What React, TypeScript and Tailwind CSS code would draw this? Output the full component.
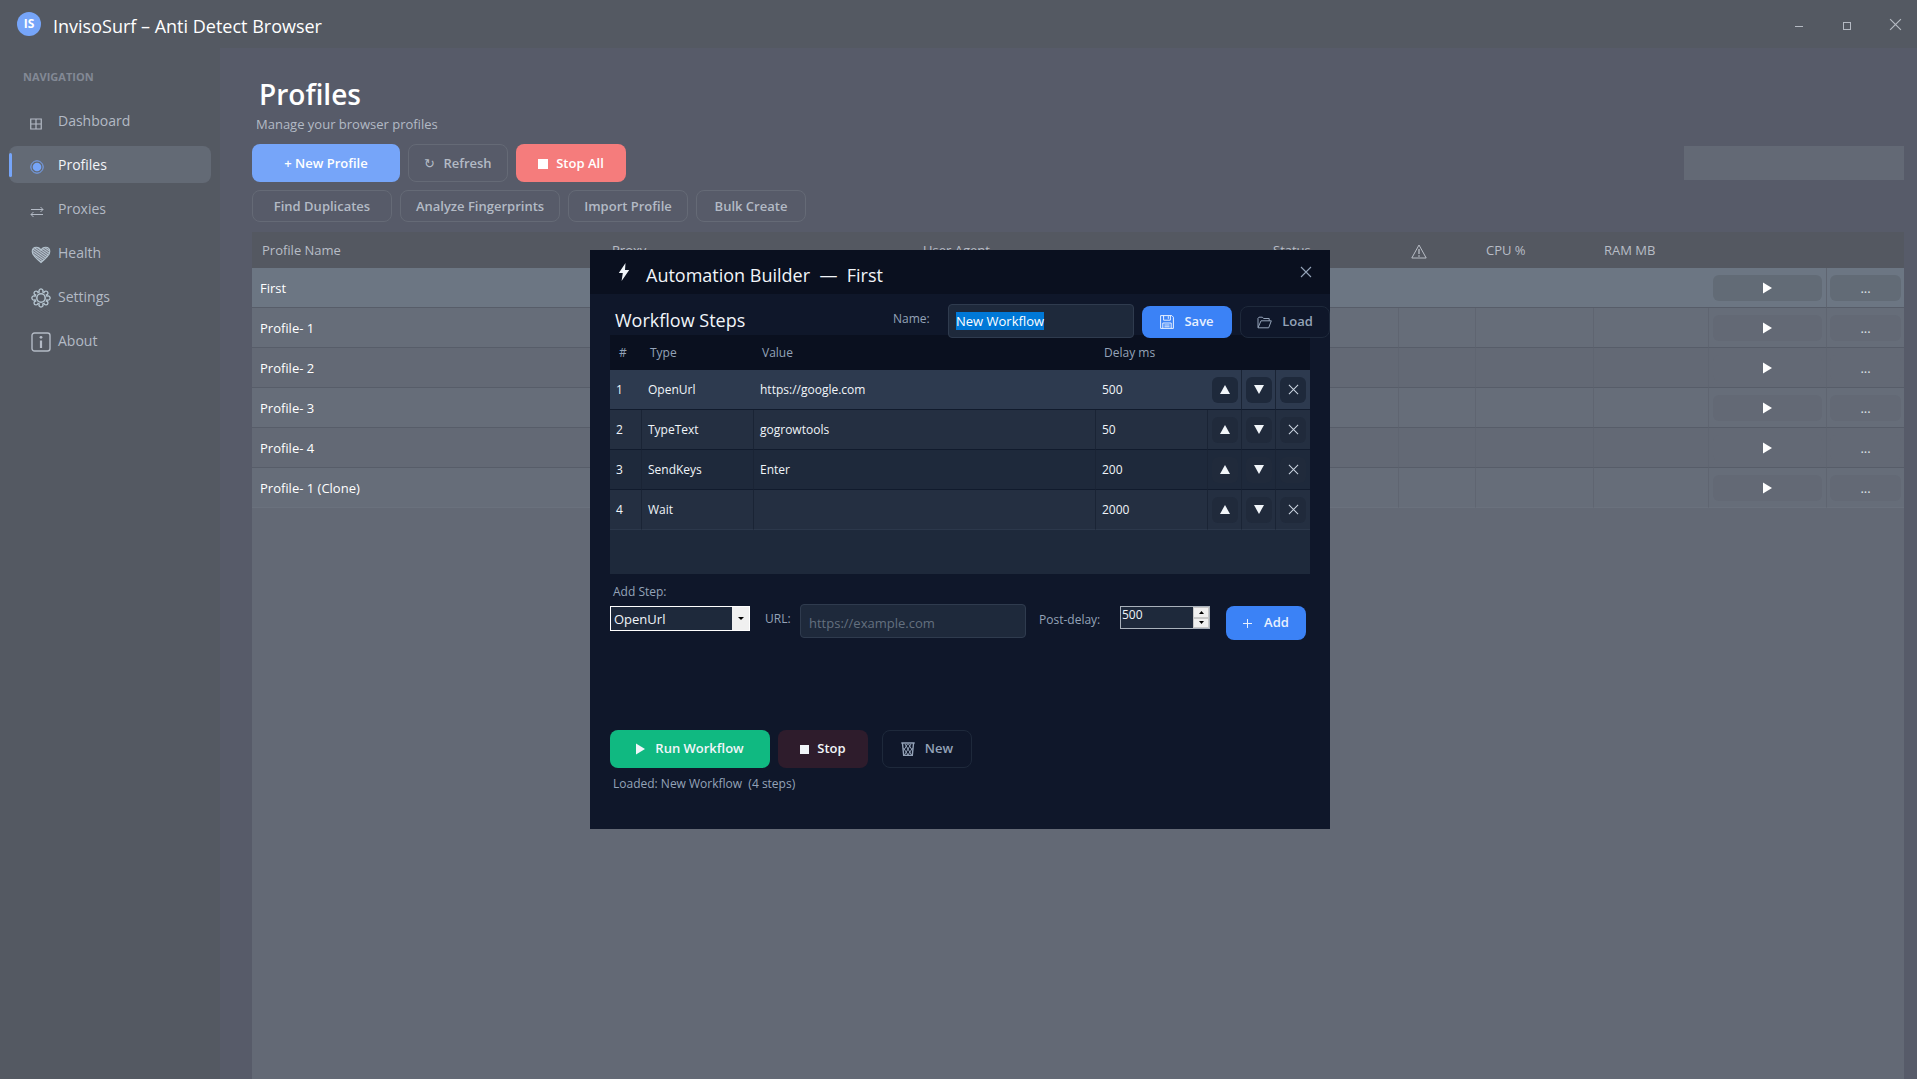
import { useEffect, useRef } from "react";
import { clsx } from "clsx";

const GridIcon = () => (
  <svg width="12" height="12" viewBox="0 0 12 12" fill="none" stroke="currentColor" className="mt-1.5">
    <path d="M.75 1h10.5v10H.75zM6 1v10M.75 6h10.5" strokeWidth="1.2" />
  </svg>
);

const TargetIcon = () => (
  <svg width="14" height="14" viewBox="0 0 14 14" fill="none" stroke="currentColor" className="mt-1">
    <circle cx="7" cy="7" r="6.2" strokeWidth="1" />
    <circle cx="7" cy="7" r="4.3" fill="currentColor" stroke="none" />
  </svg>
);

const SwapIcon = () => (
  <svg width="14" height="12" viewBox="0 0 14 12" fill="none" stroke="currentColor" className="mt-1.5">
    <path d="M1 3.5h12M10.5 1l2.5 2.5L10.5 6M13 8.5H1M3.5 6L1 8.5 3.5 11" strokeWidth="1" />
  </svg>
);

const HeartIcon = () => (
  <svg width="21" height="18" viewBox="-1 0 21 18" className="mt-1">
    <defs>
      <pattern id="hatch" width="2" height="2" patternUnits="userSpaceOnUse" patternTransform="rotate(-55)">
        <rect width="1.3" height="2" fill="#b9c5d2" />
      </pattern>
    </defs>
    <path
      d="M10 16.5C7 13.5 1.2 10 1.2 5.6 1.2 3 3 1.2 5.4 1.2c2 0 3.7 1.2 4.6 3 .9-1.8 2.6-3 4.6-3 2.4 0 4.2 1.8 4.2 4.4 0 4.4-5.8 7.9-8.8 10.9z"
      fill="url(#hatch)"
      stroke="#b4c3ce"
      strokeWidth="1.1"
    />
  </svg>
);

const GearIcon = () => (
  <svg width="21" height="20" viewBox="-1 0 21 20" fill="none" stroke="#b4c3ce" className="mt-0.5">
    <circle cx="10" cy="10" r="4.2" strokeWidth="1.5" />
    <path
      d="M8.3 4a2 2 0 1 1 3.4 0l1.3.6a2 2 0 1 1 2.4 2.4l.6 1.3a2 2 0 1 1 0 3.4l-.6 1.3a2 2 0 1 1-2.4 2.4l-1.3.6a2 2 0 1 1-3.4 0L7 15.4A2 2 0 1 1 4.6 13L4 11.7a2 2 0 1 1 0-3.4L4.6 7A2 2 0 1 1 7 4.6z"
      strokeWidth="1.3"
    />
  </svg>
);

const InfoIcon = () => (
  <svg width="21" height="20" viewBox="-1 0 21 20" fill="none" stroke="currentColor" className="mt-0.5">
    <rect x="1" y="1" width="18" height="18" rx="2.5" strokeWidth="1.4" />
    <path d="M10 8.5V16" strokeWidth="2.2" />
    <circle cx="10" cy="5.3" r="1.4" fill="currentColor" stroke="none" />
  </svg>
);

const WarnIcon = () => (
  <svg width="16" height="15" viewBox="0 0 16 15" fill="none" stroke="currentColor">
    <path d="M8 1L15.2 14H.8z" strokeWidth="1" />
    <path d="M8 5v5M8 11.3v1.4" strokeWidth="1.3" />
  </svg>
);

const BoltIcon = () => (
  <svg width="12" height="20" viewBox="0 0 12 20" fill="currentColor">
    <path d="M7.5 1L.8 11h4L3.6 19l7.6-11H7z" />
  </svg>
);

const SaveIcon = () => (
  <svg width="14" height="14" viewBox="0 0 14 14" fill="none" stroke="currentColor">
    <path d="M.6.6h11.2l1.6 1.6v11.2H.6zM3.6.6v4.6h6.8V.6M8.3 1.2v2.6M2.8 13.4V8h8.4v5.4M4.4 10h5.2M4.4 11.8h5.2" />
  </svg>
);

const FolderIcon = () => (
  <svg width="15" height="13" viewBox="0 0 15 13" fill="none" stroke="currentColor">
    <path d="M1 11.5V2.2L2 1.2h3.4l1.2 1.3h5.6v2.3M1 11.8l3-7h10.3l-2.6 7z" strokeLinejoin="round" />
  </svg>
);

const TrashIcon = () => (
  <svg width="14" height="14" viewBox="0 0 14 14" fill="none" stroke="currentColor">
    <path d="M.3 1h13.4M1.5 1.5l1.2 12h8.6l1.2-12" strokeWidth="1.4" />
    <path d="M4 2l6.5 11M7.5 2l3.5 6M10 2L3.5 13M6.5 2L3 8M2.5 6l4.5 7M11.5 6L7 13" strokeWidth="1" />
  </svg>
);

const XIcon = ({ size }: { size: number }) => (
  <svg width={size} height={size} viewBox="0 0 12 12" stroke="currentColor" fill="none">
    <path d="M1 1l10 10M11 1L1 11" strokeWidth="1.1" />
  </svg>
);

const PlayGlyph = () => (
  <svg width="9" height="12" viewBox="0 0 9 12" fill="currentColor">
    <path d="M0 0.5L9 6 0 11.5z" />
  </svg>
);

const UpGlyph = () => (
  <svg width="10" height="9" viewBox="0 0 10 9" fill="currentColor">
    <path d="M5 0l5 9H0z" />
  </svg>
);

const DownGlyph = () => (
  <svg width="10" height="9" viewBox="0 0 10 9" fill="currentColor">
    <path d="M0 0h10L5 9z" />
  </svg>
);

const navItems = [
  { label: "Dashboard", icon: <GridIcon /> },
  { label: "Profiles", icon: <TargetIcon />, active: true },
  { label: "Proxies", icon: <SwapIcon /> },
  { label: "Health", icon: <HeartIcon /> },
  { label: "Settings", icon: <GearIcon /> },
  { label: "About", icon: <InfoIcon /> },
];

const profiles = ["First", "Profile- 1", "Profile- 2", "Profile- 3", "Profile- 4", "Profile- 1 (Clone)"];

const steps = [
  { type: "OpenUrl", value: "https://google.com", delay: "500" },
  { type: "TypeText", value: "gogrowtools", delay: "50" },
  { type: "SendKeys", value: "Enter", delay: "200" },
  { type: "Wait", value: "", delay: "2000" },
];

const TitleBar = () => (
  <header className="-mr-0.5 flex h-12 shrink-0 items-center bg-[#545962] pl-[17px] text-[#b5bac3]">
    <div className="flex size-6 items-center justify-center rounded-full bg-[#76a5f9] text-xs font-bold text-white">
      IS
    </div>
    <h1 className="mt-1 ml-3 flex-1 text-lg leading-6 font-medium text-white">InvisoSurf – Anti Detect Browser</h1>
    <button aria-label="Minimize" className="flex h-12 w-12 items-center justify-center">
      <span className="mt-1 h-px w-2 bg-current" />
    </button>
    <button aria-label="Maximize" className="flex h-12 w-12 items-center justify-center">
      <span className="mt-1 size-2 border border-current" />
    </button>
    <button aria-label="Close" className="flex h-12 w-12 items-center justify-center">
      <XIcon size={13} />
    </button>
  </header>
);

const Sidebar = () => (
  <aside className="w-[220px] shrink-0 bg-[#545962] px-[9px] pt-5">
    <p className="pl-[14px] text-[11px] leading-[18px] font-bold text-[#838995]">NAVIGATION</p>
    <nav className="mt-4 flex flex-col gap-[7px]">
      {navItems.map((item) => (
        <a
          key={item.label}
          href="#"
          className={clsx(
            "relative flex h-[37px] items-center rounded-lg pl-[21px] text-sm",
            item.active ? "bg-[#636a75] text-[#f3f5f8]" : "text-[#b3bac5]"
          )}
        >
          {item.active && <span className="absolute left-0 h-6 w-[3px] rounded-sm bg-[#76a5f9]" />}
          <span className={clsx("w-7", item.active && "text-[#76a5f9]")}>{item.icon}</span>
          {item.label}
        </a>
      ))}
    </nav>
  </aside>
);

const OutlineButton = ({ children, className }: { children: React.ReactNode; className?: string }) => (
  <button
    className={clsx(
      "flex items-center justify-center rounded-lg border border-[#656a76] pt-0.5 text-[13px] font-semibold text-[#b3bac5]",
      className
    )}
  >
    {children}
  </button>
);

const ProfileTable = () => (
  <div className="mt-2.5 flex-1 bg-[#636975]">
    <table className="w-full table-fixed border-separate border-spacing-0 text-left text-[13px] text-white">
      <colgroup>
        <col />
        <col className="w-[311px]" />
        <col />
        <col className="w-[136px]" />
        <col className="w-[77px]" />
        <col className="w-[118px]" />
        <col className="w-[115px]" />
        <col className="w-[118px]" />
        <col className="w-[77px]" />
      </colgroup>
      <thead>
        <tr className="h-9 bg-[#545861] text-[#b8bdc6]">
          <th className="pt-0.5 pl-2.5 font-normal">Profile Name</th>
          <th className="pt-0.5 pl-2.5 font-normal">Proxy</th>
          <th className="pt-0.5 pl-2.5 font-normal">User Agent</th>
          <th className="pt-0.5 pl-2.5 font-normal">Status</th>
          <th className="pt-0.5 pl-3 font-normal" aria-label="Warnings">
            <WarnIcon />
          </th>
          <th className="pt-0.5 pl-2.5 font-normal">CPU %</th>
          <th className="pt-0.5 pl-2.5 font-normal">RAM MB</th>
          <th />
          <th />
        </tr>
      </thead>
      <tbody>
        {profiles.map((name, i) => (
          <tr
            key={name}
            className={clsx(
              "h-10 [&>td]:border-b [&>td]:border-[#575d69] last:[&>td]:border-b-[#6a717d]",
              i === 0 ? "bg-[#6c7683]" : i % 2 ? "bg-[#666d79]" : "bg-[#636975]"
            )}
          >
            <td className="pt-0.5 pl-2">{name}</td>
            {[0, 1, 2, 3, 4, 5].map((c) => (
              <td key={c} className={i ? "border-r border-r-[#5f6571]!" : undefined} />
            ))}
            <td className="border-r border-r-[#5f6571]! px-1">
              <button
                aria-label={`Run ${name}`}
                className={clsx("flex h-[26px] w-full items-center justify-center rounded-md", i ? "bg-[#636975]" : "bg-[#626b76]")}
              >
                <PlayGlyph />
              </button>
            </td>
            <td className="px-[3px]">
              <button
                aria-label={`More actions for ${name}`}
                className={clsx(
                  "block h-[26px] w-full rounded-md text-[13px] leading-5 text-[#dfe3e8]",
                  i ? "bg-[#636975]" : "bg-[#626b76]"
                )}
              >
                ...
              </button>
            </td>
          </tr>
        ))}
      </tbody>
    </table>
  </div>
);

const StepButton = ({
  label,
  lit,
  className,
  children,
}: {
  label: string;
  lit: boolean;
  className: string;
  children: React.ReactNode;
}) => (
  <button
    aria-label={label}
    className={clsx(
      "mx-auto flex size-[26px] items-center justify-center rounded-md",
      lit ? "bg-[#1e293b]" : "bg-[#202a3b]",
      className
    )}
  >
    {children}
  </button>
);

const StepTable = () => (
  <div className="h-[239px] bg-[#1e293b]">
    <table className="w-full table-fixed border-separate border-spacing-0 text-left text-xs text-[#f1f5f9]">
      <colgroup>
        <col className="w-8" />
        <col className="w-28" />
        <col />
        <col className="w-28" />
        <col className="w-[34px]" />
        <col className="w-[34px]" />
        <col className="w-[34px]" />
      </colgroup>
      <thead>
        <tr className="h-[35px] bg-[#0a101f] text-[#94a3b8]">
          <th className="pl-[9px] font-normal">#</th>
          <th className="pl-2 font-normal">Type</th>
          <th className="pl-2 font-normal">Value</th>
          <th className="pl-2 font-normal">Delay ms</th>
          <th />
          <th />
          <th />
        </tr>
      </thead>
      <tbody>
        {steps.map((step, i) => {
          const cell = clsx("pl-1.5", i > 0 && "border-r border-r-[#1a2435]!");
          return (
            <tr
              key={step.type}
              className={clsx(
                "h-10 [&>td]:border-b [&>td]:border-[#111b2d] last:[&>td]:border-b-[#2c384b]",
                i === 0 ? "bg-[#2d3a4f]" : i % 2 ? "bg-[#242f41]" : "bg-[#1e293b]"
              )}
            >
              <td className={cell}>{i + 1}</td>
              <td className={cell}>{step.type}</td>
              <td className={cell}>{step.value}</td>
              <td className={cell}>{step.delay}</td>
              <td className="border-r border-r-[#1a2435]!">
                <StepButton label={`Move step ${i + 1} up`} lit={i === 0} className="text-[#f1f5f9]">
                  <UpGlyph />
                </StepButton>
              </td>
              <td className="border-r border-r-[#1a2435]!">
                <StepButton label={`Move step ${i + 1} down`} lit={i === 0} className="text-[#f1f5f9]">
                  <DownGlyph />
                </StepButton>
              </td>
              <td>
                <StepButton label={`Delete step ${i + 1}`} lit={i === 0} className="text-[#cbd5e1]">
                  <XIcon size={11} />
                </StepButton>
              </td>
            </tr>
          );
        })}
      </tbody>
    </table>
  </div>
);

const AutomationBuilder = () => {
  const nameRef = useRef<HTMLInputElement>(null);

  useEffect(() => {
    nameRef.current?.focus();
    nameRef.current?.select();
  }, []);

  return (
    <section
      role="dialog"
      aria-label="Automation Builder"
      className="flex w-[740px] flex-col bg-[#0f172a] pb-[35px] text-xs text-[#94a3b8]"
    >
      <div className="flex h-11 shrink-0 items-center bg-[#0a101f] pr-[18px] pl-7 text-[#f1f5f9]">
        <BoltIcon />
        <h2 className="mt-1.5 ml-4 flex-1 text-lg leading-6 font-medium whitespace-pre">Automation Builder  —  First</h2>
        <button aria-label="Close dialog" className="text-[#94a3b8]">
          <XIcon size={12} />
        </button>
      </div>

      <div className="relative flex h-[41px] shrink-0 items-start pt-2.5 pl-[25px]">
        <h3 className="flex-1 pt-1 text-lg leading-6 font-medium text-[#f1f5f9]">Workflow Steps</h3>
        <label htmlFor="name" className="w-[55px] pt-[7px] leading-4">
          Name:
        </label>
        <input
          id="name"
          ref={nameRef}
          defaultValue="New Workflow"
          className="h-[34px] w-[186px] rounded-sm border border-[#2f3b4e] bg-[#1e293b] px-[7px] text-[13px] text-white outline-none selection:bg-[#0078d7] selection:text-white"
        />
        <button className="mt-0.5 ml-2 flex h-8 w-[90px] items-center justify-center gap-2.5 rounded-lg bg-[#3b82f6] text-[13px] font-semibold text-[#e8f0fe]">
          <SaveIcon />
          Save
        </button>
        <button className="mt-0.5 ml-2 flex h-8 w-[90px] items-center justify-center gap-2.5 rounded-lg border border-[#1e293b] bg-[#0f172a] text-[13px] font-semibold text-[#94a3b8]">
          <FolderIcon />
          Load
        </button>
      </div>

      <div className="px-5">
        <StepTable />

        <p className="mt-2 pl-[3px] leading-5">Add Step:</p>
        <div className="mt-0.5 flex items-start">
          <div className="relative mt-0.5 h-[25px] w-[140px] border border-white bg-[#1e293b]">
            <select
              aria-label="Add Step"
              className="h-full w-full appearance-none pl-[3px] text-[13px] leading-5 text-[#f1f5f9] outline-none"
            >
              <option>OpenUrl</option>
              <option>TypeText</option>
              <option>SendKeys</option>
              <option>Wait</option>
            </select>
            <span className="pointer-events-none absolute inset-y-0 right-0 flex w-[17px] items-center justify-center bg-[#f0f0f0] text-black">
              <svg width="6" height="3" viewBox="0 0 6 3" fill="currentColor">
                <path d="M0 0h6L3 3z" />
              </svg>
            </span>
          </div>
          <label htmlFor="url" className="ml-[15px] w-[35px] pt-[7px] leading-4">
            URL:
          </label>
          <input
            id="url"
            placeholder="https://example.com"
            className="h-[34px] w-[226px] rounded-sm border border-[#2f3b4e] bg-[#1e293b] px-2 pt-1 text-[13px] text-white outline-none placeholder:text-[#64707f]"
          />
          <label htmlFor="delay" className="ml-[13px] w-[81px] pt-2 leading-4">
            Post-delay:
          </label>
          <div className="mt-0.5 flex h-[23px] w-[90px] border border-[#a9b1bb] bg-[#1e293b]">
            <input
              id="delay"
              defaultValue="500"
              inputMode="numeric"
              className="min-w-0 flex-1 self-start pl-px text-xs text-[#f1f5f9] outline-none"
            />
            <div className="flex w-4 flex-col bg-white text-black">
              <button aria-label="Increase" className="flex flex-1 items-center justify-center border border-[#c8c8c8] bg-[#f0f0f0]">
                <svg width="5" height="3" viewBox="0 0 5 3" fill="currentColor">
                  <path d="M0 3h5L2.5 0z" />
                </svg>
              </button>
              <button aria-label="Decrease" className="flex flex-1 items-center justify-center border border-[#c8c8c8] bg-[#f0f0f0]">
                <svg width="5" height="3" viewBox="0 0 5 3" fill="currentColor">
                  <path d="M0 0h5L2.5 3z" />
                </svg>
              </button>
            </div>
          </div>
          <button className="mt-0.5 ml-4 flex h-[34px] w-20 items-center justify-center gap-3 rounded-lg bg-[#3b82f6] text-[13px] font-semibold text-[#e8f0fe]">
            <svg width="9" height="9" viewBox="0 0 9 9" stroke="currentColor">
              <path d="M4.5 0v9M0 4.5h9" />
            </svg>
            Add
          </button>
        </div>

        <div className="mt-[90px] flex text-[13px] font-semibold text-[#f1f5f9]">
          <button className="flex h-[38px] w-40 items-center justify-center gap-2.5 rounded-lg bg-[#10b981]">
            <PlayGlyph />
            Run Workflow
          </button>
          <button className="ml-2 flex h-[38px] w-[90px] items-center justify-center gap-2 rounded-lg bg-[#2e1c2c]">
            <span className="size-[9px] bg-current" />
            Stop
          </button>
          <button className="ml-3.5 flex h-[38px] w-[90px] items-center justify-center gap-2.5 rounded-lg border border-[#1e293b] text-[#94a3b8]">
            <TrashIcon />
            New
          </button>
        </div>
        <p className="mt-1.5 pl-[3px] leading-5 whitespace-pre">Loaded: New Workflow  (4 steps)</p>
      </div>
    </section>
  );
};

export default function App() {
  return (
    <div className="relative flex h-screen flex-col overflow-hidden bg-[#575b69] font-['Open_Sans','Noto_Sans',sans-serif]">
      <TitleBar />
      <div className="flex min-h-0 flex-1">
        <Sidebar />
        <main className="flex min-w-0 flex-1 flex-col pt-7 pr-[13px] pl-8">
          <h2 className="pl-[7px] text-[28px] leading-9 font-semibold text-white">Profiles</h2>
          <p className="mt-0.5 pl-1 text-[13px] leading-5 text-[#b3bac5]">Manage your browser profiles</p>
          <div className="mt-2.5 flex items-center gap-2">
            <button className="h-[38px] w-[148px] rounded-lg bg-[#76a5f9] pt-0.5 text-[13px] font-semibold text-white">
              + New Profile
            </button>
            <OutlineButton className="h-[38px] w-[100px] gap-2">
              <span className="font-normal">↻</span>
              Refresh
            </OutlineButton>
            <button className="flex h-[38px] w-[110px] items-center justify-center gap-2 rounded-lg bg-[#f57c7c] pt-0.5 text-[13px] font-semibold text-white">
              <span className="size-2.5 bg-current" />
              Stop All
            </button>
            <input aria-label="Search profiles" className="ml-auto h-[34px] w-[220px] bg-[#636975] px-2 text-[13px] text-white outline-none" />
          </div>
          <div className="mt-2 flex gap-2">
            <OutlineButton className="h-8 w-[140px]">Find Duplicates</OutlineButton>
            <OutlineButton className="h-8 w-40">Analyze Fingerprints</OutlineButton>
            <OutlineButton className="h-8 w-[120px]">Import Profile</OutlineButton>
            <OutlineButton className="h-8 w-[110px]">Bulk Create</OutlineButton>
          </div>
          <ProfileTable />
        </main>
      </div>
      <div className="absolute inset-0 flex items-center justify-center pl-[3px]">
        <AutomationBuilder />
      </div>
    </div>
  );
}
